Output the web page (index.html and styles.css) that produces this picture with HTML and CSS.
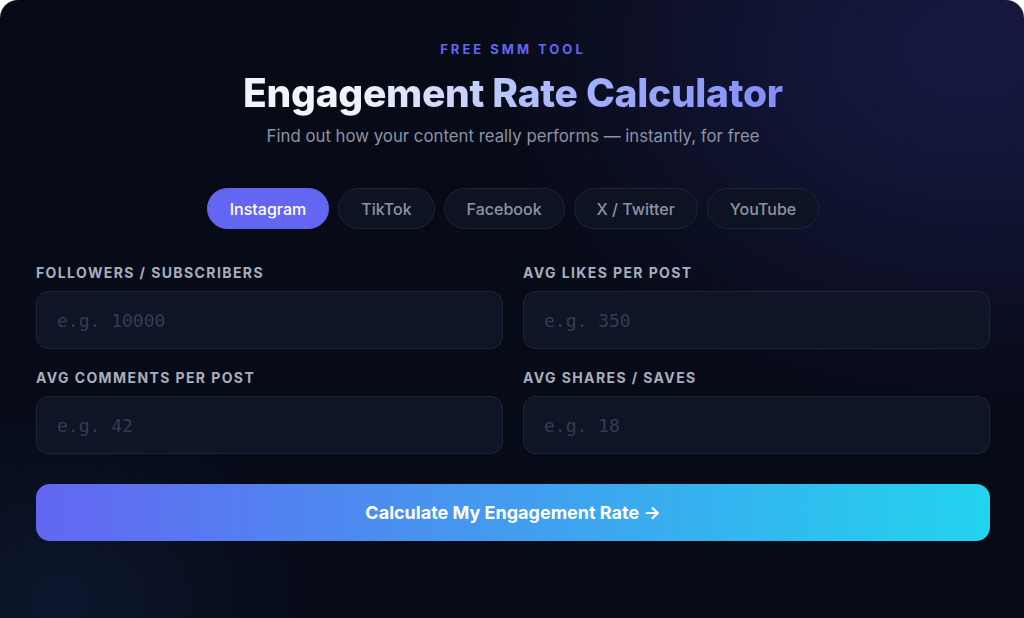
FILE: index.html
```html
<!DOCTYPE html>
<html lang="en">
<head>
<meta charset="utf-8">
<title>Engagement Rate Calculator</title>
<link rel="stylesheet" href="styles.css">
</head>
<body>
<main class="card">
  <header class="hero">
    <p class="eyebrow">FREE SMM TOOL</p>
    <h1 class="title">Engagement Rate Calculator</h1>
    <p class="subtitle">Find out how your content really performs — instantly, for free</p>
  </header>
  <nav class="tabs">
    <button class="tab active">Instagram</button>
    <button class="tab">TikTok</button>
    <button class="tab">Facebook</button>
    <button class="tab">X / Twitter</button>
    <button class="tab">YouTube</button>
  </nav>
  <form class="form">
    <div class="grid">
      <label class="field">
        <span class="label">FOLLOWERS / SUBSCRIBERS</span>
        <input class="input" type="text" placeholder="e.g. 10000">
      </label>
      <label class="field">
        <span class="label">AVG LIKES PER POST</span>
        <input class="input" type="text" placeholder="e.g. 350">
      </label>
      <label class="field">
        <span class="label">AVG COMMENTS PER POST</span>
        <input class="input" type="text" placeholder="e.g. 42">
      </label>
      <label class="field">
        <span class="label">AVG SHARES / SAVES</span>
        <input class="input" type="text" placeholder="e.g. 18">
      </label>
    </div>
    <button class="cta" type="button">Calculate My Engagement Rate →</button>
  </form>
</main>
</body>
</html>
```
FILE: styles.css
```css
* { box-sizing: border-box; }
html, body {
  margin: 0;
  height: 100%;
  background: #ffffff;
}
body {
  font-family: Inter, "Noto Sans", sans-serif;
  overflow: hidden;
}
.card {
  width: 1024px;
  min-height: 640px;
  border-radius: 18px;
  background:
    radial-gradient(ellipse 480px 360px at 970px 50px, rgba(40, 40, 112, 0.5), rgba(40, 40, 112, 0) 100%),
    radial-gradient(ellipse 260px 200px at 60px 600px, rgba(20, 35, 70, 0.45), rgba(20, 35, 70, 0) 100%),
    #070b18;
  padding: 40px 34px 0 36px;
}
.hero {
  text-align: center;
}
.eyebrow {
  margin: 0;
  font-size: 13px;
  font-weight: 700;
  letter-spacing: 3px;
  color: #6366f1;
  line-height: 18px;
}
.title {
  margin: 12px 0 0;
  font-size: 39px;
  font-weight: 800;
  line-height: 46px;
  letter-spacing: -0.3px;
  background: linear-gradient(90deg, #f1f5f9 20%, #a5b4fc 60%, #818cf8 100%);
  -webkit-background-clip: text;
  background-clip: text;
  color: transparent;
  display: inline-block;
}
.subtitle {
  margin: 9px 0 0;
  font-size: 16.8px;
  line-height: 22px;
  color: #8b93a5;
}
.tabs {
  display: flex;
  justify-content: center;
  gap: 9px;
  margin-top: 41px;
}
.tab {
  font-family: inherit;
  height: 41px;
  padding: 0 22px;
  border-radius: 999px;
  border: 1px solid #1c2436;
  background: #0d1323;
  color: #8b93a5;
  font-size: 16px;
  font-weight: 500;
}
.tab.active {
  background: #6366f1;
  border-color: #6366f1;
  color: #ffffff;
}
.form {
  margin-top: 34px;
}
.grid {
  display: grid;
  grid-template-columns: 1fr 1fr;
  column-gap: 20px;
  row-gap: 19px;
}
.field {
  display: flex;
  flex-direction: column;
  gap: 8px;
}
.label {
  font-size: 14px;
  font-weight: 700;
  letter-spacing: 1.4px;
  line-height: 20px;
  color: #a7afbd;
}
.input {
  height: 58px;
  border-radius: 12px;
  border: 1px solid #1c2436;
  background: #0e1526;
  padding: 0 20px;
  font-family: "DejaVu Sans Mono", "Liberation Mono", monospace;
  font-size: 18px;
  color: #e2e8f0;
  outline: none;
}
.input::placeholder {
  color: #333d50;
}
.cta {
  display: block;
  width: 100%;
  margin-top: 30px;
  height: 57px;
  border: none;
  border-radius: 14px;
  background: linear-gradient(90deg, #6366f1 0%, #22d3ee 100%);
  color: #ffffff;
  font-family: inherit;
  font-size: 18px;
  font-weight: 700;
}
```
